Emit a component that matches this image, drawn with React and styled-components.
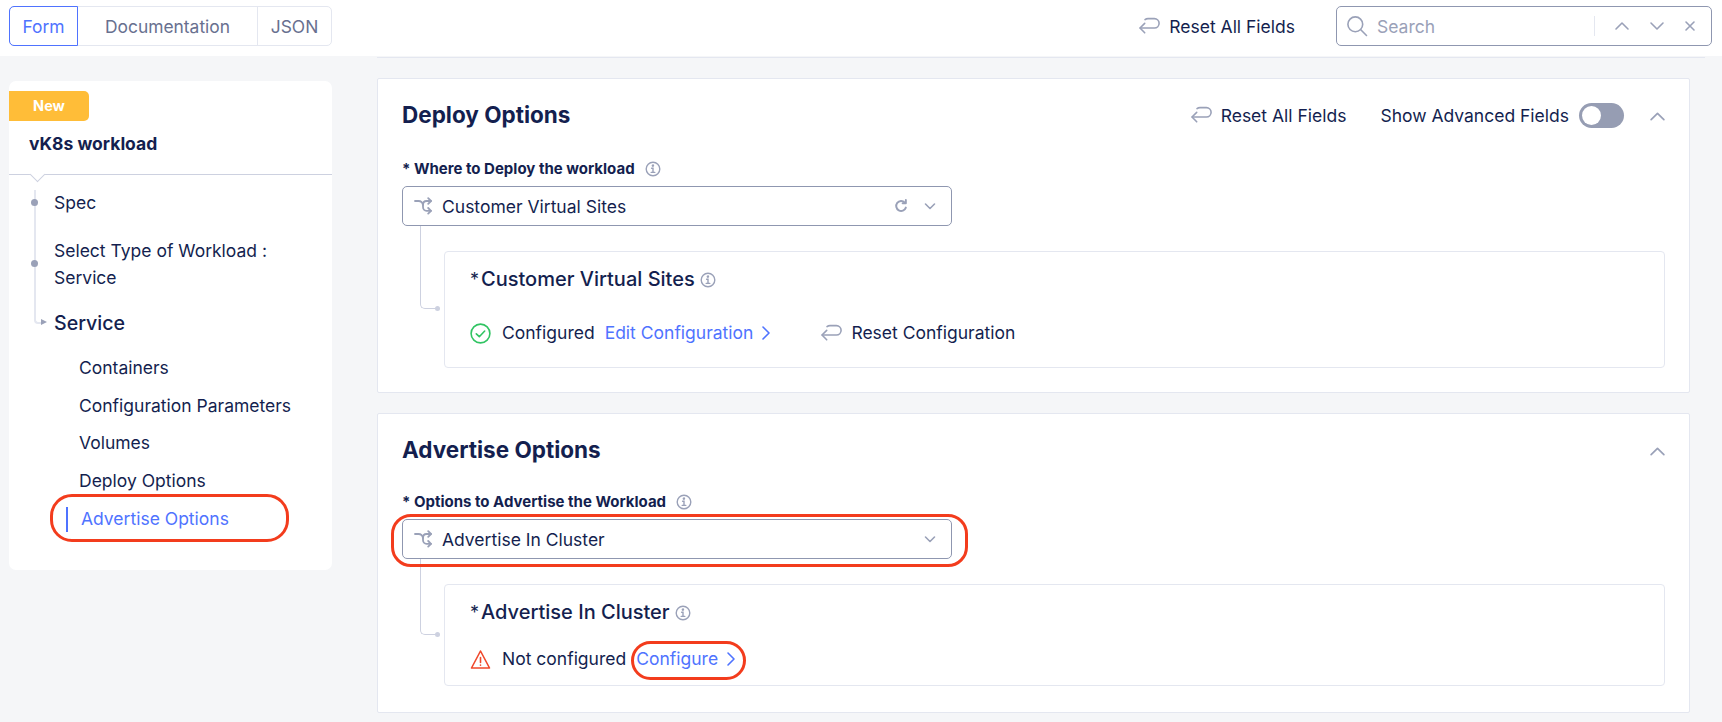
import React from 'react';
import styled, { createGlobalStyle } from 'styled-components';

const GlobalStyle = createGlobalStyle`
  html, body { margin: 0; padding: 0; height: 722px; overflow: hidden; background: #f5f6f8; }
  * { box-sizing: border-box; }
  body { font-family: Inter, "Noto Sans", sans-serif; color: #141f4f; }
`;

const Page = styled.div`
  width: 1722px;
  height: 722px;
  overflow: hidden;
`;

const TopBar = styled.header`
  height: 56px;
  background: #fff;
  display: flex;
  align-items: flex-start;
  padding: 6px 10px 0 9px;
  position: relative;
  &:after {
    content: '';
    position: absolute;
    left: 377px;
    right: 17px;
    bottom: -2px;
    height: 1px;
    background: #e4e7f0;
  }
`;

const Tabs = styled.div`
  display: flex;
  width: 323px;
  height: 40px;
  border: 1px solid #e4e7f0;
  border-radius: 5px;
`;

const Tab = styled.div`
  height: 40px;
  margin: -1px 0 0 -1px;
  width: ${(p) => p.$w}px;
  flex: none;
  display: flex;
  align-items: center;
  justify-content: center;
  font-size: 17.4px;
  color: ${(p) => (p.$active ? '#4f73ff' : '#68708f')};
  border: 1px solid ${(p) => (p.$active ? '#4f73ff' : 'transparent')};
  border-right-color: ${(p) => (p.$active ? '#4f73ff' : '#e4e7f0')};
  border-radius: ${(p) => (p.$active ? '5px 0 0 5px' : '0')};
  &:last-child { border-right-color: transparent; }
`;

const TopActions = styled.div`
  margin-left: auto;
  display: flex;
  align-items: center;
  height: 40px;
`;

const ResetLink = styled.div`
  display: flex;
  align-items: center;
  gap: 9px;
  font-size: 17.5px;
  color: #141f4f;
  white-space: nowrap;
`;

const SearchBox = styled.div`
  width: 376px;
  height: 40px;
  margin-left: 41px;
  border: 1px solid #8f97b0;
  border-radius: 5px;
  display: flex;
  align-items: center;
  padding: 0 15px 0 9px;
`;

const SearchText = styled.span`
  font-size: 17.5px;
  color: #9aa1b8;
  margin-left: 9px;
  flex: 1;
`;

const SearchDivider = styled.div`
  width: 1px;
  height: 20px;
  background: #e4e7f0;
  margin-right: 19px;
`;

const SearchIcons = styled.div`
  display: flex;
  align-items: center;
  gap: 19px;
  color: #9aa1b8;
`;

const Body = styled.div`
  display: flex;
  align-items: flex-start;
  padding: 22px 32px 0 9px;
`;

const Sidebar = styled.aside`
  width: 323px;
  height: 489px;
  margin-top: 3px;
  flex: none;
  background: #fff;
  border-radius: 7px;
  position: relative;
`;

const NewBadge = styled.div`
  width: 80px;
  height: 30px;
  margin-top: 10px;
  padding-bottom: 2px;
  background: #ffbd38;
  border-radius: 0 5px 5px 0;
  color: #fff;
  font-size: 14.5px;
  font-weight: 700;
  display: flex;
  align-items: center;
  justify-content: center;
`;

const SideTitle = styled.div`
  font-size: 17.5px;
  font-weight: 700;
  line-height: 20px;
  padding: 13px 0 0 20px;
  height: 54px;
  border-bottom: 1px solid #cdd1e0;
  position: relative;
  &:after {
    content: '';
    position: absolute;
    left: 23px;
    bottom: -6px;
    width: 10px;
    height: 10px;
    background: #fff;
    border-right: 1px solid #cdd1e0;
    border-bottom: 1px solid #cdd1e0;
    transform: rotate(45deg);
  }
`;

const Tree = styled.nav`
  position: relative;
  padding: 14px 0 0 45px;
`;

const TreeLine = styled.div`
  position: absolute;
  left: 25px;
  top: 15px;
  width: 7px;
  height: 134px;
  border-left: 2px solid #e4e7f0;
  border-bottom: 2px solid #e4e7f0;
  border-bottom-left-radius: 4px;
`;

const TreeArrow = styled.div`
  position: absolute;
  left: 32px;
  top: 144px;
  width: 0;
  height: 0;
  border-left: 6px solid #9aa1b8;
  border-top: 3px solid transparent;
  border-bottom: 3px solid transparent;
`;

const TreeDot = styled.div`
  position: absolute;
  left: 22px;
  top: ${(p) => p.$top}px;
  width: 7px;
  height: 7px;
  border-radius: 50%;
  background: #9aa1b8;
`;

const TreeItem = styled.div`
  font-size: 17.5px;
  line-height: 27px;
  margin-bottom: ${(p) => p.$mb || 0}px;
`;

const TreeHeading = styled.div`
  font-size: 19.6px;
  font-weight: 500;
  line-height: 28px;
  margin: 18px 0 19px;
`;

const SubItem = styled.div`
  font-size: 17.5px;
  line-height: 24px;
  height: 37.5px;
  margin-left: 25px;
`;

const ActiveItem = styled.div`
  position: relative;
  font-size: 17.5px;
  line-height: 24px;
  color: #4f73ff;
  margin: 1px 0 0 27px;
  &:before {
    content: '';
    position: absolute;
    left: -15px;
    top: 0;
    width: 2px;
    height: 25px;
    background: #4f73ff;
  }
`;

const Ring = styled.div`
  position: absolute;
  top: ${(p) => p.$t}px;
  left: ${(p) => p.$l}px;
  width: ${(p) => p.$w}px;
  height: ${(p) => p.$h}px;
  border: 3px solid #f33c1d;
  border-radius: ${(p) => p.$r || 24}px;
  pointer-events: none;
  z-index: 2;
`;

const Main = styled.main`
  margin-left: 45px;
  width: 1313px;
  flex: none;
`;

const Card = styled.section`
  background: #fff;
  border: 1px solid #e4e7f0;
  border-radius: 2px;
  height: ${(p) => p.$h}px;
  margin-bottom: 20px;
  padding: 21px 24px 0 24px;
`;

const CardHead = styled.div`
  display: flex;
  align-items: center;
  height: 30px;
  margin-bottom: ${(p) => p.$mb}px;
`;

const CardTitle = styled.h2`
  margin: 0;
  font-size: 22.5px;
  font-weight: 700;
  line-height: 30px;
  flex: 1;
`;

const HeadChevron = styled.span`
  display: flex;
  margin: 2px -1px 0 0;
`;

const ToggleLabel = styled.span`
  font-size: 17.5px;
  margin-left: 34px;
`;

const Toggle = styled.div`
  width: 45px;
  height: 25px;
  margin: 0 25px 0 10px;
  border-radius: 13px;
  background: #969db3;
  position: relative;
  &:after {
    content: '';
    position: absolute;
    left: 3px;
    top: 3px;
    width: 19px;
    height: 19px;
    border-radius: 50%;
    background: #fff;
  }
`;

const FieldLabel = styled.div`
  display: flex;
  align-items: center;
  gap: 10px;
  font-size: 15px;
  font-weight: 700;
  line-height: 20px;
  margin-bottom: 7px;
  color: #141f4f;
`;

const FieldGroup = styled.div`
  position: relative;
`;

const Select = styled.div`
  width: 550px;
  height: 40px;
  border: 1px solid #8f97b0;
  border-radius: 5px;
  display: flex;
  align-items: center;
  padding: 0 15px 0 11px;
  font-size: 17.5px;
  background: #fff;
  position: relative;
  z-index: 1;
`;

const SelectText = styled.span`
  margin-left: 9px;
  flex: 1;
`;

const SelectIcons = styled.div`
  display: flex;
  align-items: center;
  gap: 16px;
`;

const Branch = styled.div`
  position: relative;
  margin-left: 42px;
  width: 1221px;
  margin-top: 25px;
  height: ${(p) => p.$h}px;
  border: 1px solid #e4e7f0;
  border-radius: 4px;
  padding: 14px 25px 0 25px;
  &:before {
    content: '';
    position: absolute;
    left: -25px;
    top: -26px;
    width: 16px;
    bottom: ${(p) => p.$drop}px;
    border-left: 1px solid #cdd1e0;
    border-bottom: 1px solid #cdd1e0;
    border-bottom-left-radius: 5px;
  }
  &:after {
    content: '';
    position: absolute;
    left: -10px;
    bottom: ${(p) => p.$drop - 2}px;
    width: 5px;
    height: 5px;
    border-radius: 50%;
    background: #cdd1e0;
  }
`;

const BranchTitle = styled.div`
  display: flex;
  align-items: center;
  gap: 5px;
  font-size: 20px;
  font-weight: 500;
  line-height: 26px;
  margin-bottom: ${(p) => p.$mb}px;
`;

const Star = styled.span`
  font-size: 18px;
  font-weight: 400;
  margin-right: 2px;
`;

const StatusRow = styled.div`
  display: flex;
  align-items: center;
  font-size: 17.5px;
  line-height: 24px;
`;

const StatusText = styled.span`
  margin-left: 11px;
`;

const BlueLink = styled.span`
  position: relative;
  display: inline-flex;
  align-items: center;
  gap: 8px;
  color: #4f73ff;
  margin-left: ${(p) => p.$ml}px;
`;

const ResetConfig = styled(ResetLink)`
  margin-left: 49px;
`;

const ResetIcon = () => (
  <svg width="22" height="20" viewBox="0 0 22 20" fill="none" stroke="#9aa1b8" strokeWidth="1.6" strokeLinecap="round" strokeLinejoin="round">
    <path d="M7 3.6c1-.8 2-1 3-1h6.4a4.7 4.7 0 0 1 0 9.4H2.2" />
    <path d="M6.7 7.4L2 12l4.7 4.8" />
  </svg>
);

const SearchIcon = () => (
  <svg width="22" height="22" viewBox="0 0 22 22" fill="none" stroke="#9aa1b8" strokeWidth="1.6" strokeLinecap="round">
    <circle cx="9.3" cy="9.3" r="7.4" />
    <path d="M14.8 14.8l5.7 5.7" />
  </svg>
);

const Chevron = ({ up, size = 16 }) => (
  <svg width={size} height={size} viewBox="0 0 16 16" fill="none" stroke="#9aa1b8" strokeWidth="1.6" strokeLinecap="round" strokeLinejoin="round">
    <path d={up ? 'M2 11l6-6 6 6' : 'M2 5l6 6 6-6'} />
  </svg>
);

const SmallChevron = () => (
  <svg width="12" height="12" viewBox="0 0 12 12" fill="none" stroke="#9aa1b8" strokeWidth="1.6" strokeLinecap="round" strokeLinejoin="round">
    <path d="M1.5 4l4.5 4.5L10.5 4" />
  </svg>
);

const CloseIcon = () => (
  <svg width="12" height="12" viewBox="0 0 12 12" fill="none" stroke="#9aa1b8" strokeWidth="1.6" strokeLinecap="round">
    <path d="M2 2l8 8M10 2l-8 8" />
  </svg>
);

const InfoIcon = () => (
  <svg width="16" height="16" viewBox="0 0 16 16" fill="none" stroke="#9aa1b8" strokeWidth="1.4" strokeLinecap="round">
    <circle cx="8" cy="8" r="6.8" />
    <path d="M6.6 7.2H8v4.2M6.2 11.4h3.6" />
    <circle cx="7.9" cy="4.6" r="0.6" fill="#9aa1b8" />
  </svg>
);

const RouteIcon = () => (
  <svg width="19" height="19" viewBox="0 0 19 19" fill="none" stroke="#9aa1b8" strokeWidth="1.8" strokeLinecap="round" strokeLinejoin="round">
    <path d="M1 4h3.5c2.5 0 4 1.5 4.5 4v2c0 2 1.5 3.8 3.5 3.8H17" />
    <path d="M9 8c0-2.5 1.5-4 3.5-4H17" />
    <path d="M14.2 1.2L17 4l-2.8 2.8M14.2 11l2.8 2.8-2.8 2.8" />
  </svg>
);

const RefreshIcon = () => (
  <svg width="14" height="14" viewBox="0 0 13 13" fill="none" stroke="#9aa1b8" strokeWidth="1.8" strokeLinecap="round" strokeLinejoin="round">
    <path d="M11 8a4.6 4.6 0 1 1-1-4.7" />
    <path d="M11 1v3H8" />
  </svg>
);

const CheckIcon = () => (
  <svg width="21" height="21" viewBox="0 0 21 21" fill="none" stroke="#31c463" strokeWidth="1.6" strokeLinecap="round" strokeLinejoin="round">
    <circle cx="10.5" cy="10.5" r="9.4" />
    <path d="M6.3 10.8l3 2.9 5.4-5.7" />
  </svg>
);

const WarnIcon = () => (
  <svg width="21" height="21" viewBox="0 0 21 21" fill="none" stroke="#f0492c" strokeWidth="1.6" strokeLinecap="round" strokeLinejoin="round">
    <path d="M10.5 2L1.5 19h18z" />
    <path d="M10.5 8.5v5M10.5 16v.2" />
  </svg>
);

const LinkChevron = () => (
  <svg width="10" height="16" viewBox="0 0 10 16" fill="none" stroke="#4f73ff" strokeWidth="1.6" strokeLinecap="round" strokeLinejoin="round">
    <path d="M2 2l6 6-6 6" />
  </svg>
);

export default function App() {
  return (
    <Page>
      <GlobalStyle />
      <TopBar>
        <Tabs>
          <Tab $active $w={69}>Form</Tab>
          <Tab $w={181}>Documentation</Tab>
          <Tab $w={75}>JSON</Tab>
        </Tabs>
        <TopActions>
          <ResetLink><ResetIcon />Reset All Fields</ResetLink>
          <SearchBox>
            <SearchIcon />
            <SearchText>Search</SearchText>
            <SearchDivider />
            <SearchIcons>
              <Chevron up />
              <Chevron />
              <CloseIcon />
            </SearchIcons>
          </SearchBox>
        </TopActions>
      </TopBar>
      <Body>
        <Sidebar>
          <NewBadge>New</NewBadge>
          <SideTitle>vK8s workload</SideTitle>
          <Tree>
            <TreeLine />
            <TreeDot $top={24} />
            <TreeDot $top={85} />
            <TreeArrow />
            <TreeItem $mb={21}>Spec</TreeItem>
            <TreeItem>Select Type of Workload :<br />Service</TreeItem>
            <TreeHeading>Service</TreeHeading>
            <SubItem>Containers</SubItem>
            <SubItem>Configuration Parameters</SubItem>
            <SubItem>Volumes</SubItem>
            <SubItem>Deploy Options</SubItem>
            <ActiveItem>Advertise Options</ActiveItem>
            <Ring $t={319} $l={41} $w={239} $h={48} $r={22} />
          </Tree>
        </Sidebar>
        <Main>
          <Card $h={315}>
            <CardHead $mb={29}>
              <CardTitle>Deploy Options</CardTitle>
              <ResetLink><ResetIcon />Reset All Fields</ResetLink>
              <ToggleLabel>Show Advanced Fields</ToggleLabel>
              <Toggle />
              <HeadChevron><Chevron up size={17} /></HeadChevron>
            </CardHead>
            <FieldGroup>
              <FieldLabel>* Where to Deploy the workload <InfoIcon /></FieldLabel>
              <Select>
                <RouteIcon />
                <SelectText>Customer Virtual Sites</SelectText>
                <SelectIcons><RefreshIcon /><SmallChevron /></SelectIcons>
              </Select>
              <Branch $h={117} $drop={58}>
                <BranchTitle $mb={28}><span><Star>*</Star>Customer Virtual Sites</span><InfoIcon /></BranchTitle>
                <StatusRow>
                  <CheckIcon />
                  <StatusText>Configured</StatusText>
                  <BlueLink $ml={10}>Edit Configuration <LinkChevron /></BlueLink>
                  <ResetConfig><ResetIcon />Reset Configuration</ResetConfig>
                </StatusRow>
              </Branch>
            </FieldGroup>
          </Card>
          <Card $h={300}>
            <CardHead $mb={27}>
              <CardTitle>Advertise Options</CardTitle>
              <HeadChevron><Chevron up size={17} /></HeadChevron>
            </CardHead>
            <FieldGroup>
              <FieldLabel>* Options to Advertise the Workload <InfoIcon /></FieldLabel>
              <Select>
                <RouteIcon />
                <SelectText>Advertise In Cluster</SelectText>
                <SelectIcons><SmallChevron /></SelectIcons>
              </Select>
              <Ring $t={22} $l={-11} $w={577} $h={53} $r={20} />
              <Branch $h={102} $drop={50}>
                <BranchTitle $mb={21}><span><Star>*</Star>Advertise In Cluster</span><InfoIcon /></BranchTitle>
                <StatusRow>
                  <WarnIcon />
                  <StatusText>Not configured</StatusText>
                  <BlueLink $ml={10}>
                    Configure <LinkChevron />
                    <Ring $t={-6} $l={-5} $w={115} $h={39} $r={20} />
                  </BlueLink>
                </StatusRow>
              </Branch>
            </FieldGroup>
          </Card>
        </Main>
      </Body>
    </Page>
  );
}
